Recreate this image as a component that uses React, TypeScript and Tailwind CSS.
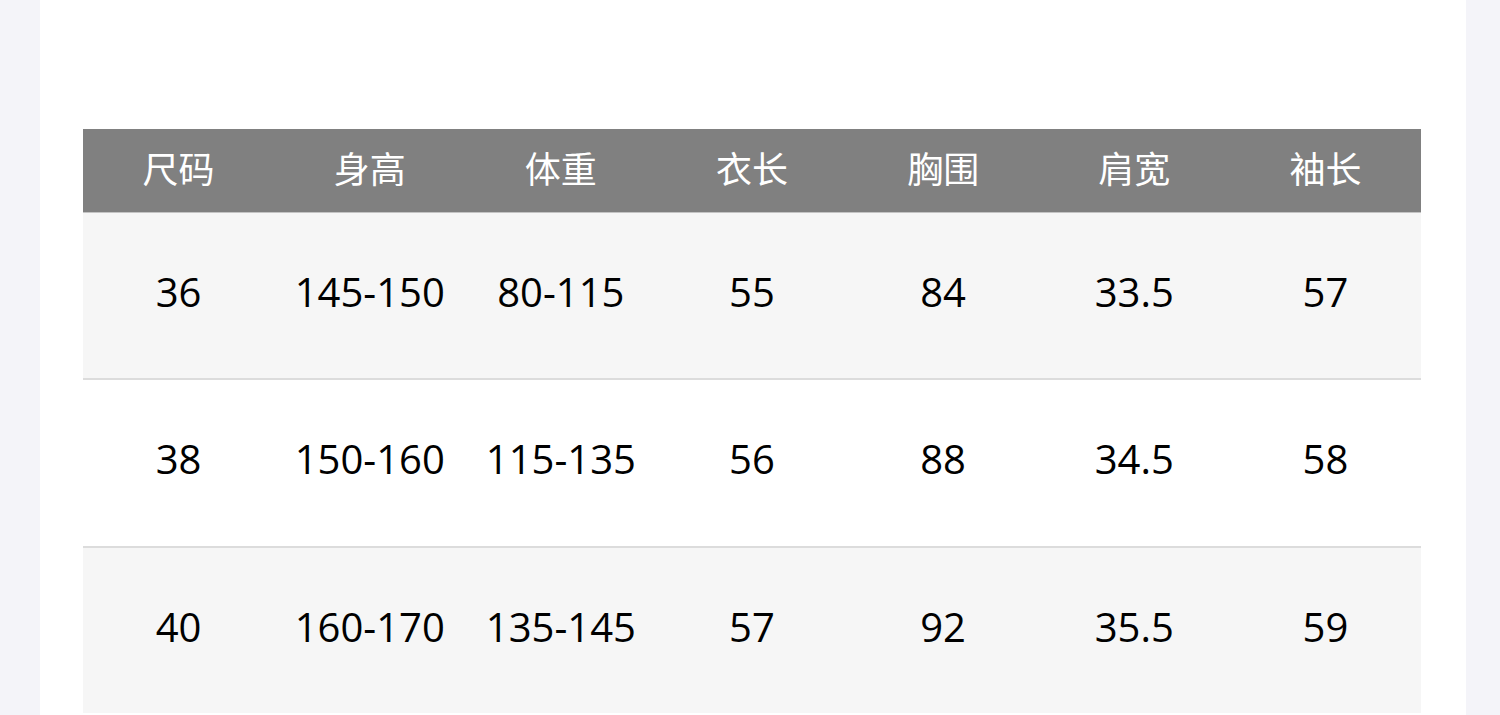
/**
 * SizeChart - size table for a garment product page
 */

const headers = ['尺码', '身高', '体重', '衣长', '胸围', '肩宽', '袖长']

const rows = [
  ['36', '145-150', '80-115', '55', '84', '33.5', '57'],
  ['38', '150-160', '115-135', '56', '88', '34.5', '58'],
  ['40', '160-170', '135-145', '57', '92', '35.5', '59'],
]

export default function App() {
  return (
    <div
      className="h-[715px] overflow-hidden bg-[#f4f4f9] px-[40px] pr-[34px]"
      style={{ fontFamily: '"Open Sans", "Noto Sans CJK SC", sans-serif' }}
    >
      <div className="h-full bg-white pt-[129px] pl-[43px] pr-[45px]">
        {/* Header */}
        <div className="grid grid-cols-7 h-[84px] bg-[#808080] border-b border-[#c4c4c4]">
          {headers.map((h) => (
            <div
              key={h}
              className="flex items-center justify-center pb-[2px] text-[36px] text-white"
            >
              {h}
            </div>
          ))}
        </div>

        {/* Rows - the last one runs off the bottom of the page */}
        {rows.map((row, i) => (
          <div
            key={row[0]}
            className={
              i === 0
                ? 'grid grid-cols-7 h-[167px] bg-[#f6f6f6] border-b-2 border-[#dcdcdc]'
                : i === 1
                  ? 'grid grid-cols-7 h-[168px] bg-white border-b-2 border-[#dcdcdc]'
                  : 'grid grid-cols-7 h-[165px] bg-[#f6f6f6]'
            }
          >
            {row.map((cell, j) => (
              <div
                key={j}
                className="flex items-center justify-center pb-[8px] text-[40px] text-black"
              >
                {cell}
              </div>
            ))}
          </div>
        ))}
      </div>
    </div>
  )
}
